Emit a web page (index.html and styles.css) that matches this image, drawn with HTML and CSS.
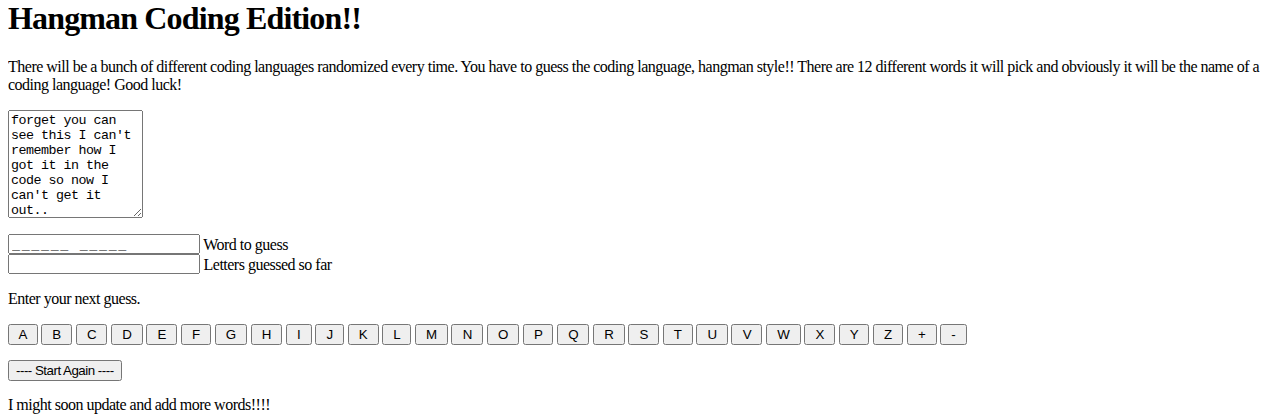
FILE: index.html
```html
<!DOCTYPE html>
<html lang="en">
<head>
<meta charset="utf-8">
<title>Hangman Coding Edition!!</title>
<link rel="stylesheet" href="styles.css">
</head>
<body>
<h1 class="title">Hangman Coding Edition!!</h1>
<p class="intro">There will be a bunch of different coding languages randomized every time. You have to guess the coding language, hangman style!! There are 12 different words it will pick and obviously it will be the name of a coding language! Good luck!</p>
<div class="notes"><textarea class="note-box">forget you can see this I can't remember how I got it in the code so now I can't get it out..</textarea></div>
<p class="fields"><input class="field word" type="text" value="______ _____"> Word to guess<br><input class="field" type="text" value=""> Letters guessed so far</p>
<p class="prompt">Enter your next guess.</p>
<p class="letters"><button class="key"> A </button> <button class="key"> B </button> <button class="key"> C </button> <button class="key"> D </button> <button class="key"> E </button> <button class="key"> F </button> <button class="key"> G </button> <button class="key"> H </button> <button class="key"> I </button> <button class="key"> J </button> <button class="key"> K </button> <button class="key"> L </button> <button class="key"> M </button> <button class="key"> N </button> <button class="key"> O </button> <button class="key"> P </button> <button class="key"> Q </button> <button class="key"> R </button> <button class="key"> S </button> <button class="key"> T </button> <button class="key"> U </button> <button class="key"> V </button> <button class="key"> W </button> <button class="key"> X </button> <button class="key"> Y </button> <button class="key"> Z </button> <button class="key"> + </button> <button class="key"> - </button></p>
<p class="restart"><button class="key wide">---- Start Again ----</button></p>
<p class="footer-note">I might soon update and add more words!!!!</p>
</body>
</html>
```

FILE: styles.css
```css
html {
  background: #ffffff;
}

body {
  margin: 0 8px 8px;
  font-family: "Liberation Serif", "Times New Roman", serif;
  font-size: 16px;
  letter-spacing: -0.5px;
  color: #000000;
}

.title {
  margin: 0 0 21px;
  font-size: 32px;
  font-weight: bold;
  letter-spacing: -0.85px;
}

.intro {
  margin: 0 0 16px;
}

.notes {
  margin: 0 0 16px;
}

.note-box {
  display: block;
  box-sizing: border-box;
  width: 135px;
  height: 108px;
  margin: 0;
  overflow: hidden;
  font-family: "Liberation Mono", "Courier New", monospace;
  font-size: 13.33px;
  letter-spacing: -0.5px;
}

.fields {
  margin: 0 0 16px;
}

.field {
  box-sizing: border-box;
  width: 192px;
  height: 20px;
  margin: 0;
  font-family: "Liberation Mono", "Courier New", monospace;
  font-size: 13.33px;
  letter-spacing: 1.67px;
  vertical-align: bottom;
}

.word {
  padding-top: 4px;
}

.prompt {
  margin: 0 0 16px;
}

.letters {
  margin: 0 0 15px;
}

.key {
  font-family: "Liberation Sans", Arial, sans-serif;
  font-size: 13.33px;
  letter-spacing: -0.42px;
  white-space: pre;
}

.wide {
  letter-spacing: -0.5px;
}

.restart {
  margin: 0 0 15px;
}

.footer-note {
  margin: 0;
}
```
